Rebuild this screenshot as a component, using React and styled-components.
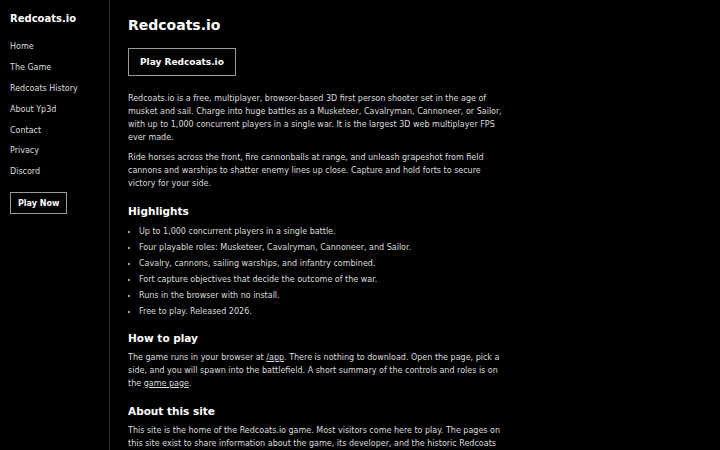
import React from "react";
import styled, { createGlobalStyle } from "styled-components";

const Global = createGlobalStyle`
  html, body { margin: 0; padding: 0; background: #000; }
  body { font-family: "DejaVu Sans", "Liberation Sans", sans-serif; color: #ddd; }
  * { box-sizing: border-box; }
`;

const Layout = styled.div`
  display: flex;
  min-height: 450px;
  background: #000;
`;

const Sidebar = styled.nav`
  width: 110px;
  flex: none;
  border-right: 1px solid #2a2a2a;
  padding: 12px 10px;
  display: flex;
  flex-direction: column;
`;

const Brand = styled.div`
  font-weight: bold;
  font-size: 10px;
  color: #fff;
  line-height: 14px;
  margin-bottom: 11px;
`;

const NavLink = styled.a`
  font-size: 8px;
  line-height: 10px;
  color: #ddd;
  text-decoration: none;
  padding: 5.4px 0;
`;

const OutlineButton = styled.a`
  align-self: flex-start;
  display: inline-flex;
  align-items: center;
  justify-content: center;
  border: 1px solid #9a9a9a;
  color: #fff;
  font-weight: bold;
  text-decoration: none;
  font-size: ${(p) => (p.$small ? "8px" : "9px")};
  height: ${(p) => (p.$small ? "22px" : "28px")};
  padding: 0 ${(p) => (p.$small ? "7px" : "11px")};
  margin-top: ${(p) => (p.$small ? "10px" : "0")};
`;

const Main = styled.main`
  flex: 1;
  padding: 15px 18px 0;
  display: flex;
  flex-direction: column;
`;

const Content = styled.div`
  width: 378px;
`;

const Title = styled.h1`
  font-size: 14px;
  line-height: 20px;
  margin: 0 0 13px;
  color: #fff;
`;

const Para = styled.p`
  font-size: 8px;
  line-height: 13px;
  margin: 0 0 7px;
  color: #ddd;
`;

const Lead = styled.div`
  margin-top: 16px;
`;

const Heading = styled.h2`
  font-size: 10.5px;
  line-height: 14px;
  color: #fff;
  margin: 14px 0 6px;
`;

const List = styled.ul`
  margin: 0 0 -3.5px;
  padding-left: 11px;
  font-size: 8px;
  line-height: 16px;
  color: #ddd;
`;

const Link = styled.a`
  color: #ddd;
  text-decoration: underline;
`;

const navItems = ["Home", "The Game", "Redcoats History", "About Yp3d", "Contact", "Privacy", "Discord"];

const highlights = [
  "Up to 1,000 concurrent players in a single battle.",
  "Four playable roles: Musketeer, Cavalryman, Cannoneer, and Sailor.",
  "Cavalry, cannons, sailing warships, and infantry combined.",
  "Fort capture objectives that decide the outcome of the war.",
  "Runs in the browser with no install.",
  "Free to play. Released 2026.",
];

export default function App() {
  return (
    <>
      <Global />
      <Layout>
        <Sidebar>
          <Brand>Redcoats.io</Brand>
          {navItems.map((n) => (
            <NavLink key={n} href="#">{n}</NavLink>
          ))}
          <OutlineButton $small href="#">Play Now</OutlineButton>
        </Sidebar>
        <Main>
          <Content>
            <Title>Redcoats.io</Title>
            <OutlineButton href="#">Play Redcoats.io</OutlineButton>
            <Lead>
              <Para>
                Redcoats.io is a free, multiplayer, browser-based 3D first person shooter set in the age of
                musket and sail. Charge into huge battles as a Musketeer, Cavalryman, Cannoneer, or Sailor,
                with up to 1,000 concurrent players in a single war. It is the largest 3D web multiplayer FPS
                ever made.
              </Para>
              <Para>
                Ride horses across the front, fire cannonballs at range, and unleash grapeshot from field
                cannons and warships to shatter enemy lines up close. Capture and hold forts to secure
                victory for your side.
              </Para>
            </Lead>
            <Heading>Highlights</Heading>
            <List>
              {highlights.map((h) => (
                <li key={h}>{h}</li>
              ))}
            </List>
            <Heading>How to play</Heading>
            <Para>
              The game runs in your browser at <Link href="#">/app</Link>. There is nothing to download. Open the page, pick a
              side, and you will spawn into the battlefield. A short summary of the controls and roles is on
              the <Link href="#">game page</Link>.
            </Para>
            <Heading>About this site</Heading>
            <Para>
              This site is the home of the Redcoats.io game. Most visitors come here to play. The pages on
              this site exist to share information about the game, its developer, and the historic Redcoats
              regiments that inspired it.
            </Para>
          </Content>
        </Main>
      </Layout>
    </>
  );
}
